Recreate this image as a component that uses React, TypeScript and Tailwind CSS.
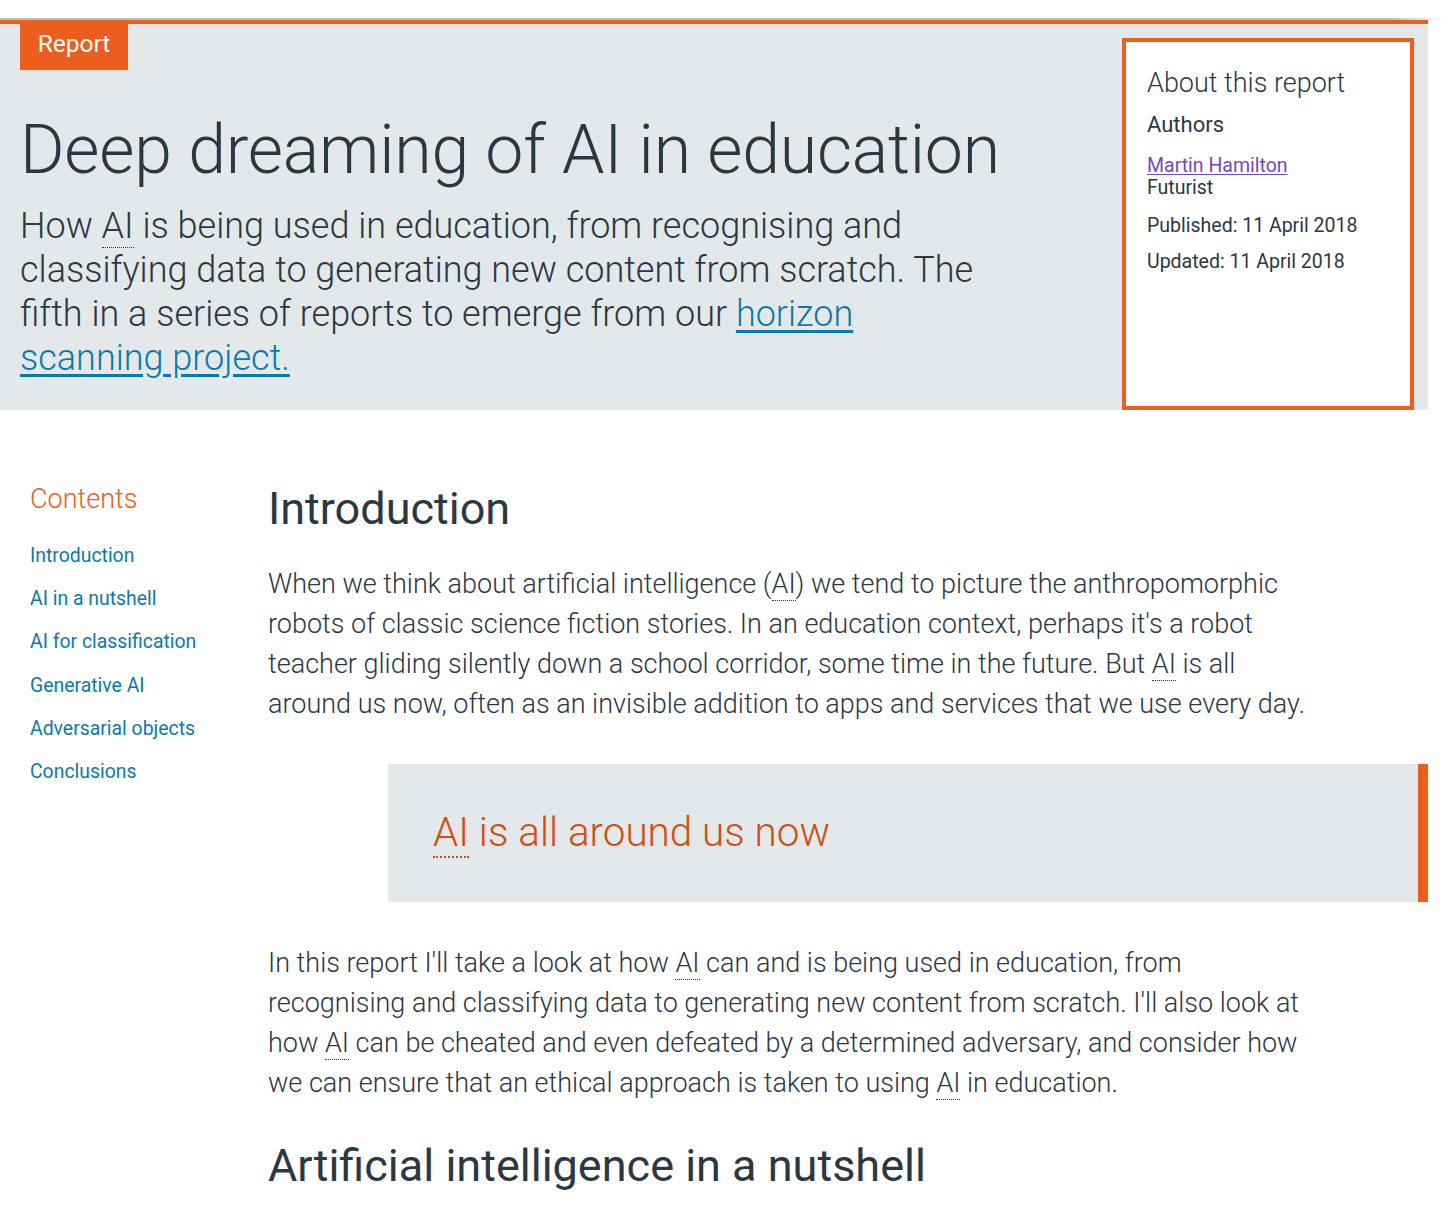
import React from "react";

function Abbr({ children, thick }: { children: React.ReactNode; thick?: boolean }) {
    return (
        <abbr
            title="Artificial Intelligence"
            className={
                thick
                    ? "no-underline border-b-2 border-dotted border-current"
                    : "no-underline border-b border-dotted border-current"
            }
        >
            {children}
        </abbr>
    );
}

const contents = [
    "Introduction",
    "AI in a nutshell",
    "AI for classification",
    "Generative AI",
    "Adversarial objects",
    "Conclusions",
];

export default function App() {
    return (
        <div className="w-[1446px] min-h-[1210px] bg-white font-['Roboto','Liberation_Sans',sans-serif] text-[#2b3842]">
            <div className="h-[18px] bg-white" />
            <div className="h-[2px] bg-gradient-to-r from-[#babec1] from-[96%] to-white" />

            <div className="w-[1428px]">
                <div className="h-[4px] bg-[#eb5e1d]" />

                <header className="flex h-[386px] bg-[#e3e8eb] pl-[20px] pr-[14px]">
                    <div className="flex-1">
                        <span className="block w-[108px] h-[46px] bg-[#eb5e1d] text-center text-white text-[24.5px] leading-[40px]">
                            Report
                        </span>
                        <h1 className="mt-[40px] whitespace-nowrap text-[68px] leading-[80px] font-light tracking-[-0.2px]">
                            Deep dreaming of AI in education
                        </h1>
                        <p className="mt-[14px] max-w-[962px] text-[36px] leading-[44px] font-light">
                            How <Abbr>AI</Abbr> is being used in education, from recognising and
                            classifying data to generating new content from scratch. The fifth in a
                            series of reports to emerge from our{" "}
                            <a href="#" className="text-[#0b7aab] underline underline-offset-[4px]">
                                horizon scanning project.
                            </a>
                        </p>
                    </div>

                    <aside className="mt-[14px] w-[292px] shrink-0 border-4 border-[#eb5e1d] bg-white pl-[21px] pt-[25px]">
                        <h2 className="text-[27px] leading-[32px] font-light">About this report</h2>
                        <h3 className="mt-[12px] text-[22px] leading-[28px]">Authors</h3>
                        <div className="mt-[16px] text-[19.5px] leading-[22px]">
                            <a href="#" className="text-[#7548c0] underline underline-offset-[2px]">
                                Martin Hamilton
                            </a>
                            <div>Futurist</div>
                        </div>
                        <p className="mt-[16px] text-[19.5px] leading-[22px]">Published: 11 April 2018</p>
                        <p className="mt-[14px] text-[19.5px] leading-[22px]">Updated: 11 April 2018</p>
                    </aside>
                </header>

                <div className="flex pb-[20px]">
                    <nav className="w-[268px] shrink-0 pl-[30px] pt-[73px]">
                        <h2 className="text-[27px] leading-[32px] font-light text-[#e8611f]">Contents</h2>
                        <ul className="mt-[27px] flex flex-col gap-[15.2px]">
                            {contents.map((item) => (
                                <li key={item}>
                                    <a href="#" className="block text-[19.4px] leading-[28px] text-[#0b7aab]">
                                        {item}
                                    </a>
                                </li>
                            ))}
                        </ul>
                    </nav>

                    <main className="flex-1 pt-[71px]">
                        <h2 className="text-[45px] leading-[56px]">Introduction</h2>
                        <p className="mt-[27px] max-w-[1040px] text-[27px] leading-[40px] font-light">
                            When we think about artificial intelligence (<Abbr>AI</Abbr>) we tend to
                            picture the anthropomorphic robots of classic science fiction stories. In an
                            education context, perhaps it's a robot teacher gliding silently down a school
                            corridor, some time in the future. But <Abbr>AI</Abbr> is all around us now,
                            often as an invisible addition to apps and services that we use every day.
                        </p>

                        <blockquote className="mt-[40px] ml-[120px] border-r-[10px] border-[#eb5e1d] bg-[#e3e8eb] pl-[45px] py-[45px]">
                            <p className="text-[40.4px] leading-[48px] font-light text-[#d34e0e]">
                                <Abbr thick>AI</Abbr> is all around us now
                            </p>
                        </blockquote>

                        <p className="mt-[41px] max-w-[1040px] text-[27px] leading-[40px] font-light">
                            In this report I'll take a look at how <Abbr>AI</Abbr> can and is being used
                            in education, from recognising and classifying data to generating new content
                            from scratch. I'll also look at how <Abbr>AI</Abbr> can be cheated and even
                            defeated by a determined adversary, and consider how we can ensure that an
                            ethical approach is taken to using <Abbr>AI</Abbr> in education.
                        </p>

                        <h2 className="mt-[35px] text-[45px] leading-[56px]">
                            Artificial intelligence in a nutshell
                        </h2>
                    </main>
                </div>
            </div>
        </div>
    );
}
